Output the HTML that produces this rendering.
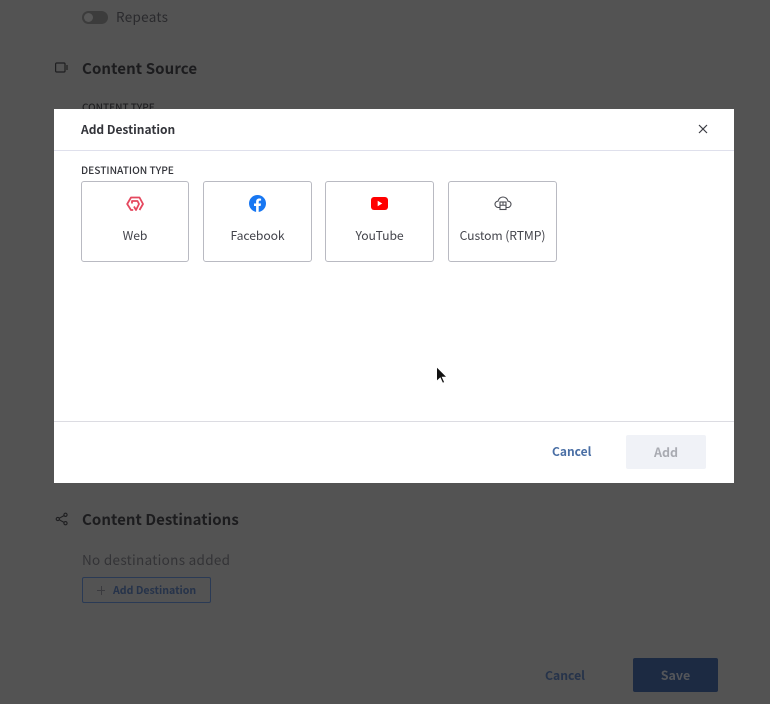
<!DOCTYPE html>
<html><head><meta charset="utf-8"><style>
html,body{margin:0;padding:0;width:770px;height:704px;overflow:hidden;background:#535353;font-family:"Liberation Sans","Noto Sans CJK JP",sans-serif}
.t{position:absolute;white-space:nowrap;line-height:1;font-family:"Noto Sans CJK JP","Liberation Sans",sans-serif}
.abs{position:absolute;box-sizing:border-box}
.card{position:absolute;top:181px;height:81px;box-sizing:border-box;border:1px solid #b9bac2;border-radius:3px;background:#fff}
.lbl{top:229px;font-size:12.2px;color:#44454c;letter-spacing:-.1px;text-align:center}
</style></head><body>
<div class="abs" style="left:82px;top:11px;width:26px;height:13px;border-radius:7px;background:#3c3c3c"></div>
<div class="abs" style="left:84px;top:13px;width:9px;height:9px;border-radius:50%;background:#575757"></div>
<div class="t" style="left:116px;top:10px;font-size:13.5px;color:#2a2a2d;letter-spacing:.3px">Repeats</div>
<svg class="abs" style="left:54px;top:61px" width="16" height="14" viewBox="0 0 16 14" fill="none" stroke="#1f1f21" stroke-width="1.2"><rect x="1.6" y="2" width="9.4" height="9" rx="1"/><path d="M13 4v5"/></svg>
<div class="t" style="left:82px;top:61px;font-size:15px;font-weight:700;color:#1c1c1e;letter-spacing:.1px">Content Source</div>
<div class="t" style="left:82px;top:101.500px;font-size:10px;font-weight:500;color:#1f1f21">CONTENT TYPE</div>

<div class="abs" style="left:54px;top:109px;width:680px;height:374px;background:#fff"></div>
<div class="t" style="left:81px;top:124px;font-size:12px;font-weight:700;color:#33343a">Add Destination</div>
<svg class="abs" style="left:698px;top:124px" width="10" height="10" viewBox="0 0 10 10" stroke="#3c3d44" stroke-width="1.2"><path d="M1 1l8 8M9 1L1 9"/></svg>
<div class="abs" style="left:54px;top:150px;width:680px;height:1px;background:#dfe0ec"></div>
<div class="t" style="left:81px;top:165px;font-size:10.200px;font-weight:500;color:#33343a">DESTINATION TYPE</div>

<div class="card" style="left:81px;width:108px"></div>
<div class="card" style="left:203px;width:109px"></div>
<div class="card" style="left:325px;width:109px"></div>
<div class="card" style="left:448px;width:109px"></div>

<svg class="abs" style="left:126px;top:196px" width="18" height="16" viewBox="0 0 18 16" fill="none" stroke="#e5485f" stroke-width="1.800" stroke-linejoin="round"><path d="M13.500 14L17 8 13.500 1.500H5L1.200 8 5 14h2.200"/><path d="M6 7.500V5h5.500L13 8l-3 6-2-3.500"/></svg>
<div class="t lbl" style="left:81px;width:108px">Web</div>

<svg class="abs" style="left:249px;top:195px" width="17" height="17" viewBox="0 0 17 17"><circle cx="8.500" cy="8.500" r="8.500" fill="#1877f2"/><path d="M7.100 17v-6H5v-2.500h2.100V6.700c0-2.100 1.250-3.250 3.150-3.250.9 0 1.850.16 1.850.16v2.060h-1.050c-1.030 0-1.350.64-1.350 1.300v1.530h2.300l-.37 2.500H9.700v6z" fill="#fff"/></svg>
<div class="t lbl" style="left:203px;width:109px">Facebook</div>

<svg class="abs" style="left:371px;top:197px" width="17" height="13" viewBox="0 0 17 13"><rect width="17" height="13" rx="3" fill="#f00"/><path d="M6.700 3.800v5.400L11.300 6.500z" fill="#fff"/></svg>
<div class="t lbl" style="left:325px;width:109px">YouTube</div>

<svg class="abs" style="left:494px;top:196px" width="18" height="16" viewBox="0 0 18 16" fill="none" stroke="#4a4b52" stroke-width="1.100"><path d="M5.800 11.500H4.200C2.500 11.500 1 10 1 8.200S2.500 5.200 4 5.200C4.500 2.800 6.500 1 9 1s4.500 1.800 5 4.200c1.500 0 3 1.200 3 3s-1.500 3.300-3.200 3.300h-1.600"/><rect x="6" y="6" width="6" height="7.500" fill="#fff"/><path d="M6 9.300h6M9 6v3.300" stroke-width="1"/></svg>
<div class="t lbl" style="left:448px;width:109px">Custom (RTMP)</div>

<svg class="abs" style="left:434px;top:364px" width="16" height="22" viewBox="0 0 16 22"><path d="M2.500 2.500v15l3.700-3.400 2.400 5.200 2.100-1-2.300-5h4.800z" fill="#111" stroke="#fff" stroke-width="1"/></svg>

<div class="abs" style="left:54px;top:421px;width:680px;height:1px;background:#dcdce2"></div>
<div class="t" style="left:552px;top:445.500px;font-size:12px;font-weight:700;color:#4a6fa5">Cancel</div>
<div class="abs" style="left:626px;top:435px;width:80px;height:34px;background:#f0f2f7;border-radius:2px"></div>
<div class="t" style="left:626px;width:80px;text-align:center;top:445.500px;font-size:12.500px;font-weight:700;color:#a9abb2">Add</div>

<svg class="abs" style="left:55px;top:512px" width="14" height="14" viewBox="0 0 14 14" fill="none" stroke="#1f1f21" stroke-width="1.100"><circle cx="2.800" cy="7" r="1.600"/><circle cx="10.500" cy="2.800" r="1.600"/><circle cx="10.500" cy="11.200" r="1.600"/><path d="M4.300 6.200l4.700-2.600M4.300 7.800l4.700 2.600"/></svg>
<div class="t" style="left:82px;top:512px;font-size:15px;font-weight:700;color:#1c1c1e;letter-spacing:.05px">Content Destinations</div>
<div class="t" style="left:82px;top:553px;font-size:13.500px;color:#333336;letter-spacing:.3px">No destinations added</div>
<div class="abs" style="left:82px;top:577px;width:129px;height:26px;border:1px solid #2a3a55;border-radius:2px"></div>
<div class="abs" style="left:97px;top:590px;width:8px;height:1px;background:#3a3a3e"></div>
<div class="abs" style="left:100.500px;top:586px;width:1px;height:9px;background:#3a3a3e"></div>
<div class="t" style="left:113px;top:585.500px;font-size:10.600px;font-weight:700;color:#26334a">Add Destination</div>
<div class="t" style="left:545px;top:669px;font-size:12.200px;font-weight:700;color:#26334a">Cancel</div>
<div class="abs" style="left:633px;top:658px;width:85px;height:34px;background:#1c2a42;border-radius:2px"></div>
<div class="t" style="left:633px;width:85px;text-align:center;top:669px;font-size:12.500px;font-weight:700;color:#54565a">Save</div>
</body></html>
